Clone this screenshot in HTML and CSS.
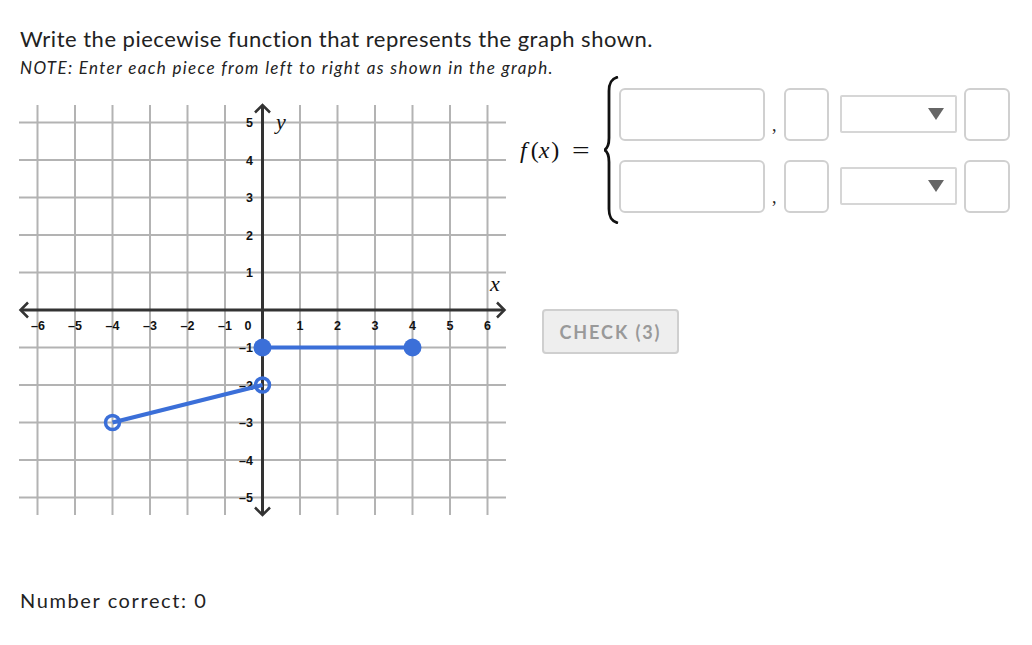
FILE: index.html
```html
<!DOCTYPE html>
<html lang="en">
<head>
    <meta charset="UTF-8">
    <title>piecewise function</title>
    <link rel="stylesheet" href="styles.css">
</head>
<body>
<div class="page">
    <div class="prompt">
        <h1 class="title">Write the piecewise function that represents the graph shown.</h1>
        <p class="note">NOTE: Enter each piece from left to right as shown in the graph.</p>
    </div>
    <div class="work">
        <svg class="graph" width="520" height="445" viewBox="0 77 520 445">
            <!-- grid -->
            <path class="grid" d="M37.5 105V515M75 105V515M112.5 105V515M150 105V515M187.5 105V515M225 105V515M300 105V515M337.5 105V515M375 105V515M412.5 105V515M450 105V515M487.5 105V515
                M19 122.5H506M19 160H506M19 197.5H506M19 235H506M19 272.5H506M19 347.5H506M19 385H506M19 422.5H506M19 460H506M19 497.5H506"/>
            <!-- axes -->
            <path class="axis" d="M21 310H504M262.5 106V514"/>
            <path class="arrow" d="M28 302.5L20.5 310L28 317.5M497 302.5L504.5 310L497 317.5M255 112.5L262.5 105L270 112.5M255 507.5L262.5 515L270 507.5"/>
            <g class="ticks xticks">
                <text x="38" y="330">–6</text>
                <text x="75" y="330">–5</text>
                <text x="112.5" y="330">–4</text>
                <text x="150" y="330">–3</text>
                <text x="187.5" y="330">–2</text>
                <text x="225" y="330">–1</text>
                <text x="248" y="330">0</text>
                <text x="300" y="330">1</text>
                <text x="337.5" y="330">2</text>
                <text x="375" y="330">3</text>
                <text x="412.5" y="330">4</text>
                <text x="450" y="330">5</text>
                <text x="487.5" y="330">6</text>
            </g>
            <g class="ticks yticks">
                <text x="253" y="127">5</text>
                <text x="253" y="164.5">4</text>
                <text x="253" y="202">3</text>
                <text x="253" y="239.5">2</text>
                <text x="253" y="277">1</text>
                <text x="253" y="352">–1</text>
                <text x="253" y="389.5">–2</text>
                <text x="253" y="427">–3</text>
                <text x="253" y="464.5">–4</text>
                <text x="253" y="502">–5</text>
            </g>
            <text class="var" x="276" y="129">y</text>
            <text class="var" x="490" y="291">x</text>
            <!-- pieces -->
            <line class="seg" x1="112.5" y1="422.5" x2="262.5" y2="385"/>
            <line class="seg" x1="262.5" y1="347.5" x2="412.5" y2="347.5"/>
            <circle class="open" cx="112.5" cy="422.5" r="7"/>
            <circle class="open" cx="262.5" cy="385" r="7"/>
            <circle class="dot" cx="262.5" cy="347.5" r="9"/>
            <circle class="dot" cx="412.5" cy="347.5" r="9"/>
        </svg>
        <div class="answer">
            <div class="func">
                <span class="fx"><i class="f">f</i><span>(</span><i class="x">x</i><span>)</span><span class="eq">=</span></span>
                <svg class="brace" width="15" height="148" viewBox="0 0 15 148">
                    <path d="M14 1C8 2.5 5 6 5 15L5 62C5 69 3 72.5 0.5 74C3 75.5 5 79 5 86L5 133C5 142 8 145.5 14 147"/>
                </svg>
                <div class="pieces">
                    <div class="piece">
                        <input class="box expr" type="text">
                        <span class="comma">,</span>
                        <input class="box bound" type="text">
                        <div class="select"><span class="caret"></span></div>
                        <input class="box bound last" type="text">
                    </div>
                    <div class="piece">
                        <input class="box expr" type="text">
                        <span class="comma">,</span>
                        <input class="box bound" type="text">
                        <div class="select"><span class="caret"></span></div>
                        <input class="box bound last" type="text">
                    </div>
                </div>
            </div>
            <button class="check">CHECK (3)</button>
        </div>
    </div>
    <p class="score">Number correct: 0</p>
</div>
</body>
</html>
```

FILE: styles.css
```css
body{
    margin: 0;
    font-family: "Lato", "Liberation Sans", sans-serif;
    color: #222;
    background: #fff;
}
.prompt{
    padding: 25px 0 0 20px;
}
.title{
    margin: 0;
    font-size: 22px;
    font-weight: normal;
    line-height: 28px;
    letter-spacing: 0.5px;
}
.note{
    margin: 5px 0 -1px;
    font-size: 17px;
    line-height: 20px;
    font-style: italic;
    letter-spacing: 1.35px;
}
.work{
    display: flex;
    align-items: flex-start;
}
.graph{
    display: block;
    flex: none;
}
.grid{
    stroke: #b3b3b3;
    stroke-width: 2;
    fill: none;
}
.axis{
    stroke: #333;
    stroke-width: 3;
    fill: none;
}
.arrow{
    stroke: #333;
    stroke-width: 2.5;
    fill: none;
}
.ticks text{
    font-family: "Liberation Sans", Arial, sans-serif;
    font-weight: bold;
    font-size: 12.5px;
    fill: #111;
}
.xticks text{
    text-anchor: middle;
}
.yticks text{
    text-anchor: end;
}
.var{
    font-family: "Liberation Serif", serif;
    font-style: italic;
    font-size: 22px;
    fill: #111;
}
.seg{
    stroke: #3b6fd8;
    stroke-width: 4;
}
.open{
    stroke: #3b6fd8;
    stroke-width: 3.5;
    fill: none;
}
.dot{
    fill: #3b6fd8;
}
.answer{
    flex: none;
}
.func{
    display: flex;
    align-items: center;
    height: 146px;
}
.fx{
    display: flex;
    align-items: baseline;
    width: 84px;
    font-family: "Liberation Serif", serif;
    font-size: 24px;
    color: #111;
}
.fx .f{
    margin-right: 4px;
}
.fx .x{
    margin: 0 2px 0 0;
}
.fx .eq{
    display: inline-block;
    margin-left: 15px;
    transform: scaleX(1.3);
}
.brace{
    flex: none;
}
.brace path{
    stroke: #111;
    stroke-width: 2.8;
    fill: none;
}
.pieces{
    display: flex;
    flex-direction: column;
    gap: 19px;
}
.piece{
    display: flex;
    align-items: center;
}
.box{
    box-sizing: border-box;
    height: 53px;
    margin: 0;
    border: 2px solid #d0d0d0;
    border-radius: 6px;
    background: #fff;
    font: inherit;
    outline: none;
}
.expr{
    width: 146px;
}
.comma{
    width: 19px;
    align-self: flex-end;
    padding: 0 0 0 7px;
    box-sizing: border-box;
    font-family: "Liberation Serif", serif;
    font-size: 18px;
    line-height: 20px;
    margin-bottom: 6px;
}
.bound{
    width: 45px;
}
.bound.last{
    width: 46px;
    margin-left: 7px;
}
.select{
    box-sizing: border-box;
    width: 117px;
    height: 38px;
    margin-left: 11px;
    border: 2px solid #d6d6d6;
    border-radius: 2px;
    display: flex;
    align-items: center;
    justify-content: flex-end;
    padding-right: 11px;
}
.caret{
    width: 0;
    height: 0;
    border-left: 8px solid transparent;
    border-right: 8px solid transparent;
    border-top: 12px solid #666;
}
.check{
    display: block;
    margin: 86px 0 0 22px;
    width: 137px;
    height: 45px;
    border: 2px solid #cfcfcf;
    border-radius: 4px;
    background: #eee;
    color: #999;
    font-family: "Lato", "Liberation Sans", sans-serif;
    font-weight: bold;
    font-size: 18px;
    letter-spacing: 1.9px;
}
.score{
    margin: 66px 0 0 20px;
    font-size: 20px;
    line-height: 24px;
    letter-spacing: 1.6px;
}
```
